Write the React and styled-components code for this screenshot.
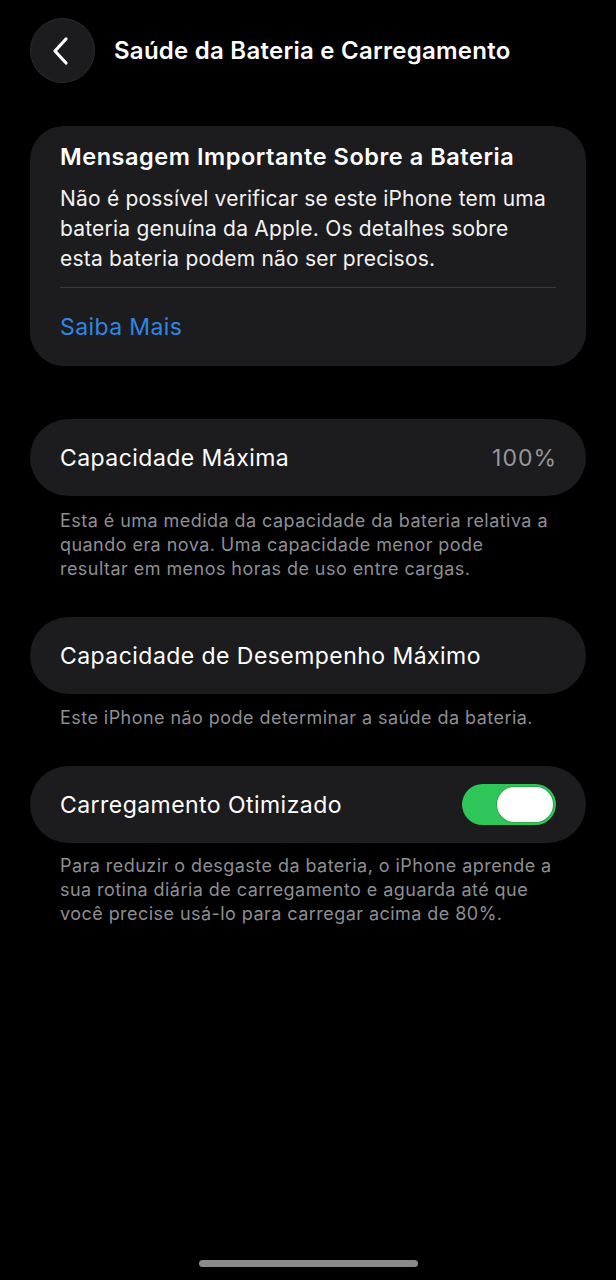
import React from "react";
import styled, { createGlobalStyle } from "styled-components";

const Global = createGlobalStyle`
  html, body { margin: 0; padding: 0; background: #000; }
  body { font-family: Inter, "Noto Sans", "Liberation Sans", sans-serif; -webkit-font-smoothing: antialiased; }
  * { box-sizing: border-box; }
`;

const Page = styled.div`
  min-height: 1280px;
  background: #000;
  color: #fff;
  display: flex;
  flex-direction: column;
  padding: 18px 30px 0;
`;

const Header = styled.header`
  display: flex;
  align-items: center;
  gap: 19px;
  height: 65px;
`;

const BackButton = styled.button`
  width: 65px;
  height: 65px;
  border-radius: 50%;
  background: #1c1c1e;
  border: 1px solid #2a2a2c;
  display: flex;
  align-items: center;
  justify-content: center;
  padding: 0;
  padding-right: 4px;
  flex-shrink: 0;
`;

const Title = styled.h1`
  margin: 0;
  font-size: 24px;
  font-weight: 600;
  letter-spacing: 0.25px;
  color: #fff;
`;

const Card = styled.section`
  margin-top: ${p => p.$mt}px;
  background: #1c1c1e;
  border-radius: ${p => (p.$pill ? "39px" : "34px")};
  padding: ${p => (p.$pill ? "0 30px" : "16px 30px 0")};
`;

const CardTitle = styled.h2`
  margin: 0;
  font-size: 23.5px;
  font-weight: 600;
  line-height: 30px;
  letter-spacing: 0.55px;
`;

const CardBody = styled.p`
  margin: 12px 0 0;
  font-size: 21px;
  line-height: 30px;
  font-weight: 400;
  letter-spacing: 0.2px;
  color: #f2f2f2;
`;

const Divider = styled.div`
  height: 1px;
  background: #3a3a3c;
  margin-top: 13px;
`;

const LinkRow = styled.div`
  height: 78px;
  display: flex;
  align-items: center;
  font-size: 23px;
  letter-spacing: 0.4px;
  color: #2f86e4;
`;

const Row = styled.div`
  height: 77px;
  display: flex;
  align-items: center;
  justify-content: space-between;
  font-size: 23px;
  letter-spacing: 0.45px;
`;

const Value = styled.span`
  color: #96969b;
  font-size: 23px;
  letter-spacing: 1px;
  margin-right: -1px;
`;

const Footnote = styled.p`
  margin: ${p => p.$mt}px 30px 0;
  font-size: 18px;
  line-height: 24px;
  letter-spacing: 0.45px;
  color: #8e8e93;
`;

const Toggle = styled.div`
  width: 94px;
  height: 41px;
  border-radius: 21px;
  background: #30c559;
  display: flex;
  align-items: center;
  justify-content: flex-end;
  padding: 0 3px;
`;

const Knob = styled.div`
  width: 56px;
  height: 35px;
  border-radius: 18px;
  background: #fff;
  box-shadow: 0 0 0 1px rgba(40, 150, 70, 0.6);
`;

const Spacer = styled.div`
  flex: 1;
`;

const HomeBar = styled.div`
  align-self: center;
  width: 219px;
  height: 7px;
  border-radius: 4px;
  background: #8a8a8a;
  margin-bottom: 13px;
`;

export default function App() {
  return (
    <>
      <Global />
      <Page>
        <Header>
          <BackButton aria-label="Voltar">
            <svg width="20" height="30" viewBox="0 0 20 30" fill="none">
              <path d="M15 3 L4 15 L15 27" stroke="#fff" strokeWidth="3.2" strokeLinecap="round" strokeLinejoin="round" />
            </svg>
          </BackButton>
          <Title>Saúde da Bateria e Carregamento</Title>
        </Header>

        <Card $mt={43}>
          <CardTitle>Mensagem Importante Sobre a Bateria</CardTitle>
          <CardBody>
            Não é possível verificar se este iPhone tem uma bateria genuína da Apple. Os detalhes sobre esta bateria podem não ser precisos.
          </CardBody>
          <Divider />
          <LinkRow>Saiba Mais</LinkRow>
        </Card>

        <Card $pill $mt={53}>
          <Row>
            <span>Capacidade Máxima</span>
            <Value>100%</Value>
          </Row>
        </Card>
        <Footnote $mt={13}>
          Esta é uma medida da capacidade da bateria relativa a quando era nova. Uma capacidade menor pode resultar em menos horas de uso entre cargas.
        </Footnote>

        <Card $pill $mt={36}>
          <Row>
            <span>Capacidade de Desempenho Máximo</span>
          </Row>
        </Card>
        <Footnote $mt={12}>Este iPhone não pode determinar a saúde da bateria.</Footnote>

        <Card $pill $mt={36}>
          <Row>
            <span>Carregamento Otimizado</span>
            <Toggle>
              <Knob />
            </Toggle>
          </Row>
        </Card>
        <Footnote $mt={11}>
          Para reduzir o desgaste da bateria, o iPhone aprende a sua rotina diária de carregamento e aguarda até que você precise usá-lo para carregar acima de 80%.
        </Footnote>

        <Spacer />
        <HomeBar />
      </Page>
    </>
  );
}
